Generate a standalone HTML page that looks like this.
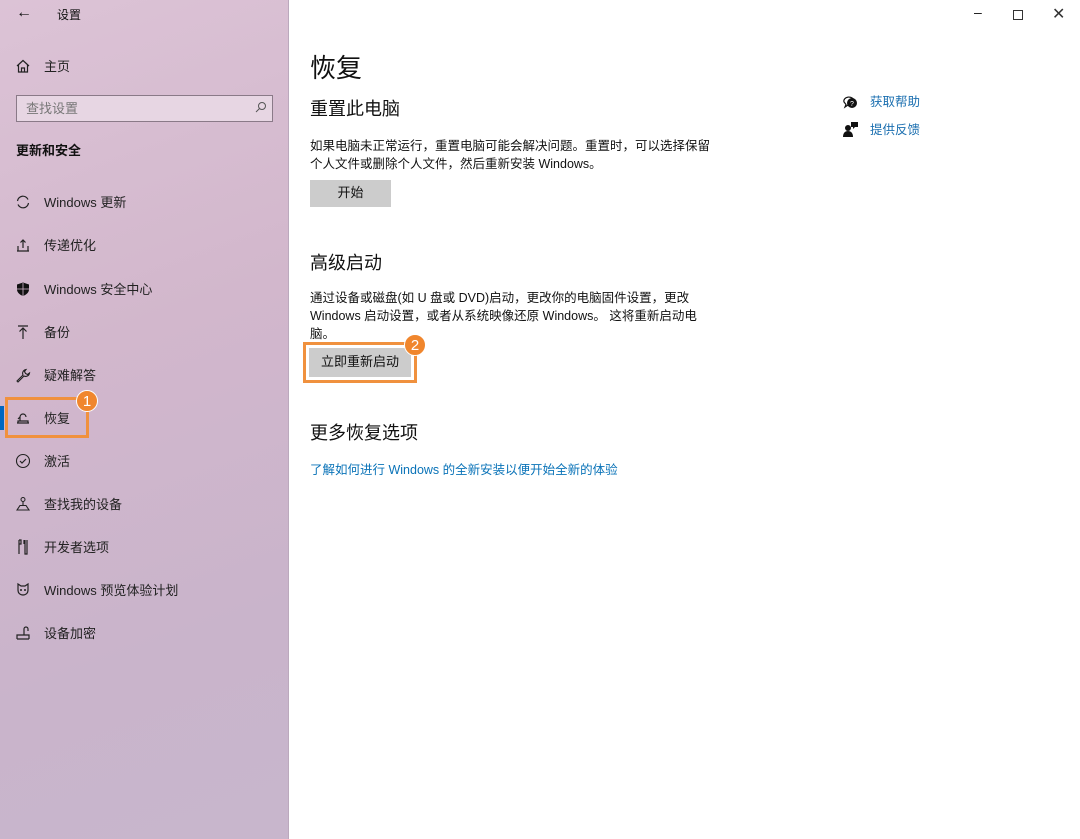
<!DOCTYPE html>
<html><head><meta charset="utf-8"><style>
*{margin:0;padding:0;box-sizing:border-box}
body{width:1080px;height:839px;position:relative;overflow:hidden;background:#fff;font-family:"Liberation Sans","Noto Sans CJK SC",sans-serif;color:#111;font-size:13px}
.side{position:absolute;left:0;top:0;width:289px;height:839px;background:linear-gradient(160deg,#dcc3d6 0%,#d2b7cc 40%,#c9b4cb 75%,#c8b6cc 100%);border-right:1px solid #bba9bd}
.t{position:absolute;white-space:nowrap}
.ic{position:absolute;left:15px;width:16px;height:16px}
.nav{position:absolute;left:44px;font-size:13px;color:#222}
.main .t{color:#111}
.btn{position:absolute;background:#ccc;font-size:13px;text-align:center}
.badge{position:absolute;width:22px;height:22px;border-radius:50%;background:#f0862d;color:#fff;font-size:15px;text-align:center;line-height:22px;border:1px solid #fff}
.box{position:absolute;border:3px solid #f0913e}
</style></head><body>
<div class="side">
<div class="t" style="left:16px;top:4px;font-size:16px">←</div>
<div class="t" style="left:57px;top:6px;font-size:12px">设置</div>
<svg class="ic" style="top:58px" viewBox="0 0 16 16"><path d="M2 8L8 2.5 14 8M3.5 7v7h9V7M6.5 14v-4h3v4" fill="none" stroke="#222" stroke-width="1.2"/></svg>
<div class="nav" style="top:56px">主页</div>
<div style="position:absolute;left:16px;top:95px;width:257px;height:27px;border:1px solid #8a7a88;background:#e7d6e3"></div>
<div class="t" style="left:26px;top:98px;font-size:13px;color:#777">查找设置</div>
<svg style="position:absolute;left:254px;top:101px" width="13" height="13" viewBox="0 0 13 13"><circle cx="8" cy="5" r="3.5" fill="none" stroke="#555"/><path d="M5.5 7.5L2 11" stroke="#555"/></svg>
<div class="t" style="left:16px;top:140px;font-size:13px;font-weight:bold">更新和安全</div>
<svg class="ic" style="top:194px" viewBox="0 0 16 16"><path d="M2.5 7A5.5 5.5 0 0 1 13 5.5M13.5 9A5.5 5.5 0 0 1 3 10.5" fill="none" stroke="#222" stroke-width="1.2"/></svg>
<div class="nav" style="top:192px">Windows 更新</div>
<svg class="ic" style="top:237px" viewBox="0 0 16 16"><path d="M2 14h12M3 14V9M13 14V9M8 11V3M5.5 5.5L8 3l2.5 2.5" fill="none" stroke="#222" stroke-width="1.2"/></svg>
<div class="nav" style="top:235px">传递优化</div>
<svg class="ic" style="top:281px" viewBox="0 0 16 16"><path d="M8 1.5L14 3.5v5c0 3-3 5.5-6 6.5-3-1-6-3.5-6-6.5v-5z" fill="#111"/><path d="M8 2v13M2 8h12" stroke="#d2b7cc" stroke-width="0.8"/></svg>
<div class="nav" style="top:279px">Windows 安全中心</div>
<svg class="ic" style="top:324px" viewBox="0 0 16 16"><path d="M3 2h10M8 4v11M4.5 7.5L8 4l3.5 3.5" fill="none" stroke="#222" stroke-width="1.2"/></svg>
<div class="nav" style="top:322px">备份</div>
<svg class="ic" style="top:367px" viewBox="0 0 16 16"><path d="M2 14l6-6c-1-2 0-5 3-5.5l-1.5 2 1 2 2 1 2-1.5C14 9 11 10 9 9l-6 6z" fill="none" stroke="#222" stroke-width="1.1"/></svg>
<div class="nav" style="top:365px">疑难解答</div>
<div style="position:absolute;left:0;top:406px;width:4px;height:24px;background:#0067c0"></div>
<svg class="ic" style="top:410px" viewBox="0 0 16 16"><path d="M2 13h12M3 13v-2h10v2M5 11V7a3 3 0 0 1 6 0M5 7L3 9" fill="none" stroke="#222" stroke-width="1.2"/></svg>
<div class="nav" style="top:408px">恢复</div>
<svg class="ic" style="top:453px" viewBox="0 0 16 16"><circle cx="8" cy="8" r="6.5" fill="none" stroke="#222" stroke-width="1.1"/><path d="M5 8l2 2 4-4" fill="none" stroke="#222" stroke-width="1.2"/></svg>
<div class="nav" style="top:451px">激活</div>
<svg class="ic" style="top:496px" viewBox="0 0 16 16"><circle cx="8" cy="3.5" r="2" fill="none" stroke="#222"/><path d="M8 5.5v4M2 14l3-4.5h6L14 14z" fill="none" stroke="#222" stroke-width="1.1"/></svg>
<div class="nav" style="top:494px">查找我的设备</div>
<svg class="ic" style="top:539px" viewBox="0 0 16 16"><path d="M4 1v14M4 1h2v4H4M10 1v14h2V1M9 1v4" fill="none" stroke="#222" stroke-width="1.2"/></svg>
<div class="nav" style="top:537px">开发者选项</div>
<svg class="ic" style="top:582px" viewBox="0 0 16 16"><path d="M3 2l3 2h4l3-2v6c0 3-2 5-5 5S3 11 3 8z" fill="none" stroke="#222" stroke-width="1.2"/><circle cx="6" cy="8" r="1" fill="#222"/><circle cx="10" cy="8" r="1" fill="#222"/></svg>
<div class="nav" style="top:580px">Windows 预览体验计划</div>
<svg class="ic" style="top:625px" viewBox="0 0 16 16"><path d="M2 14h12M2 14v-4h12v4M9 10V4a2 2 0 0 1 4 0v2" fill="none" stroke="#222" stroke-width="1.2"/></svg>
<div class="nav" style="top:623px">设备加密</div>
<div class="box" style="left:5px;top:397px;width:84px;height:41px"></div>
<div class="badge" style="left:76px;top:390px">1</div>
</div>

<div class="main">
<div class="t" style="left:974px;top:4px;font-size:14px">&#8211;</div>
<div style="position:absolute;left:1013px;top:10px;width:10px;height:10px;border:1px solid #333"></div>
<div class="t" style="left:1052px;top:4px;font-size:16px;color:#333">✕</div>

<div class="t" style="left:310px;top:48px;font-size:26px">恢复</div>
<div class="t" style="left:310px;top:95px;font-size:18px">重置此电脑</div>
<div class="t" style="left:310px;top:137px;font-size:12.5px;line-height:18px">如果电脑未正常运行，重置电脑可能会解决问题。重置时，可以选择保留<br>个人文件或删除个人文件，然后重新安装 Windows。</div>
<div class="btn" style="left:310px;top:180px;width:81px;height:27px;line-height:25px">开始</div>
<div class="t" style="left:310px;top:249px;font-size:18px">高级启动</div>
<div class="t" style="left:310px;top:289px;font-size:12.5px;line-height:18px">通过设备或磁盘(如 U 盘或 DVD)启动，更改你的电脑固件设置，更改<br>Windows 启动设置，或者从系统映像还原 Windows。 这将重新启动电<br>脑。</div>
<div class="box" style="left:303px;top:342px;width:114px;height:41px"></div>
<div class="btn" style="left:309px;top:348px;width:102px;height:29px;line-height:27px">立即重新启动</div>
<div class="badge" style="left:404px;top:334px">2</div>
<div class="t" style="left:310px;top:419px;font-size:18px">更多恢复选项</div>
<div class="t" style="left:310px;top:459px;font-size:12.5px;color:#0a73b8 !important">了解如何进行 Windows 的全新安装以便开始全新的体验</div>

<svg style="position:absolute;left:842px;top:93px" width="16" height="16" viewBox="0 0 16 16"><path d="M2 9a5 4 0 1 1 4 3l-3 2 1-2.5z" fill="none" stroke="#111" stroke-width="1.2"/><circle cx="10" cy="10" r="5" fill="#111"/><text x="10" y="13" font-size="7" fill="#fff" text-anchor="middle" font-family="Liberation Sans">?</text></svg>
<div class="t" style="left:870px;top:91px;font-size:12.5px;color:#1b6fb0">获取帮助</div>
<svg style="position:absolute;left:843px;top:121px" width="16" height="16" viewBox="0 0 16 16"><circle cx="5" cy="7" r="3" fill="#111"/><path d="M0 16c0-4 2-6 5-6s5 2 5 6z" fill="#111"/><path d="M8 1h7v5h-3l-2 2V6H8z" fill="#111"/></svg>
<div class="t" style="left:870px;top:119px;font-size:12.5px;color:#1b6fb0">提供反馈</div>
</div>
</body></html>
